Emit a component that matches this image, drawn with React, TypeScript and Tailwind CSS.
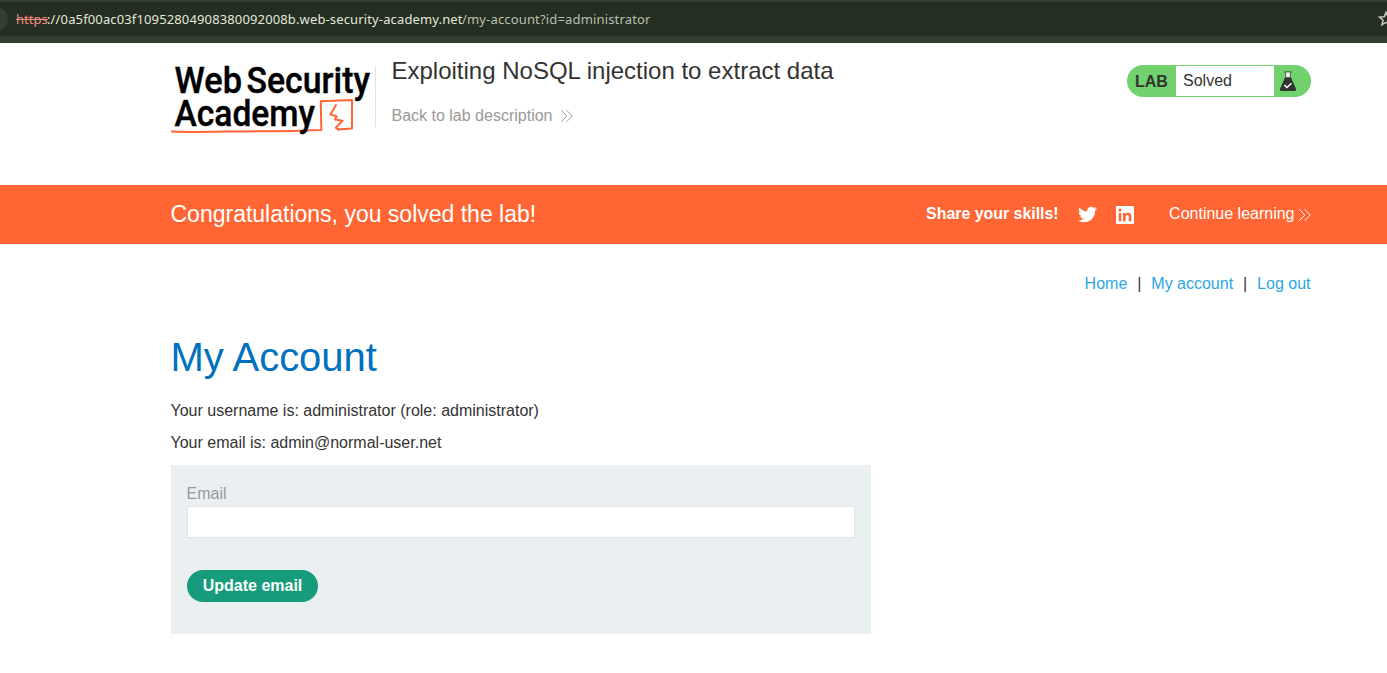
import React from "react";

function Chevrons({ className }: { className: string }) {
  return (
    <svg className={className} width="14" height="14" viewBox="0 0 14 14" fill="none" stroke="currentColor" strokeWidth="0.9">
      <path d="M1.2 1.2 6.8 7 1.2 12.8M6.6 1.2 12.2 7 6.6 12.8" />
    </svg>
  );
}

function AddressBar() {
  return (
    <div className="flex h-[43px] flex-col bg-[#343e2f] pt-[2px]">
      <div className="flex h-[34px] items-center justify-between overflow-hidden bg-[#242e21]">
        <div className="flex items-center">
          <span className="-ml-[16px] h-[24px] w-[24px] rounded-full bg-[#343e2f]" />
          <div className="ml-[8px] flex whitespace-pre font-['Noto_Sans',sans-serif] text-[13px] leading-[20px] text-[#e3e8dc]">
            <span className="w-[31px] text-[#f28b80] line-through">https</span>
            <span className="w-[415px] tracking-[0.135px]">://0a5f00ac03f10952804908380092008b.web-security-academy.net</span>
            <span className="tracking-[0.16px] text-[#b9c1b0]">/my-account?id=administrator</span>
          </div>
        </div>
        <svg className="-mr-[8px] shrink-0" width="18" height="18" viewBox="0 0 18 18" fill="none" stroke="#c5cbbd" strokeWidth="1.5">
          <path d="m9 2.5 1.8 4.2 4.7.4-3.6 3.1 1.1 4.6L9 12.4l-4 2.4 1.1-4.6-3.6-3.1 4.7-.4Z" />
        </svg>
      </div>
    </div>
  );
}

function Logo() {
  return (
    <svg className="shrink-0 overflow-visible" width="204" height="75" viewBox="171 62 204 75">
      <g fill="#000" stroke="#000" strokeWidth="0.4" fontFamily="Roboto, sans-serif" fontWeight="500" fontSize="37.4">
        <text x="174.5" y="93.3" textLength="67.5" lengthAdjust="spacingAndGlyphs">Web</text>
        <text x="246.5" y="93.3" textLength="123.5" lengthAdjust="spacingAndGlyphs">Security</text>
      </g>
      <g fill="none" stroke="#ff6633" strokeLinejoin="round" strokeLinecap="round">
        <path strokeWidth="2" d="M172 131.6C200 132.8 235 130.8 268 131.2S308 130 321.3 130L320.8 101.2 352 100 352 128.6 338 129.4" />
        <path strokeWidth="2" d="M336 105 330.4 114.4 336.6 116.2 335 119.6 342.6 120.8 335.8 127.8 338.4 129.4" />
      </g>
      <text x="174.5" y="126.3" fill="#000" stroke="#000" strokeWidth="0.4" fontFamily="Roboto, sans-serif" fontWeight="500" fontSize="36" textLength="140.5" lengthAdjust="spacingAndGlyphs">Academy</text>
    </svg>
  );
}

function LabStatus() {
  return (
    <div className="mt-[22px] flex h-[32px] w-[184px] items-stretch overflow-hidden rounded-full bg-[#70d16d] py-px">
      <span className="w-[49px] pl-[8px] text-[16px] font-bold leading-[31px]">LAB</span>
      <span className="w-[98px] bg-white pl-[7px] leading-[29px]">Solved</span>
      <svg className="ml-[5px] mt-[4px]" width="18" height="23" viewBox="0 0 18 23">
        <path d="M5.4 2h7.2" stroke="#333332" strokeWidth="1" />
        <path d="M6.9 2.5h4.2v5.3H6.9z" fill="#fff" />
        <path d="M6.7 2.6v5.4M11.3 2.6v5.4" stroke="#333332" strokeWidth=".7" />
        <path d="M6.1 7.3h5.8l5.1 11.8q.7 1.9-1.3 1.9H2.3q-2 0-1.3-1.9Z" fill="#333332" />
        <path d="m5.4 15 2.5 2.5 4.6-4.2" fill="none" stroke="#fff" strokeWidth="1.4" />
      </svg>
    </div>
  );
}

function Banner() {
  return (
    <section className="h-[59px] bg-[#ff6633] text-white">
      <div className="ml-[170.5px] flex h-[57px] w-[1141px] items-center">
        <h4 className="flex-1 text-[23px] leading-[28px]">Congratulations, you solved the lab!</h4>
        <span className="w-[151.5px] font-bold tracking-[-0.05px]">Share your skills!</span>
        <svg className="mt-[2px]" width="19" height="19" viewBox="0 0 24 24" fill="#fff">
          <path d="M23.95 4.57a10 10 0 0 1-2.82.78 4.96 4.96 0 0 0 2.16-2.73c-.95.56-2 .96-3.13 1.19a4.92 4.92 0 0 0-8.38 4.48C7.69 8.1 4.07 6.13 1.64 3.16a4.82 4.82 0 0 0-.67 2.48c0 1.71.87 3.21 2.19 4.1a4.9 4.9 0 0 1-2.23-.62v.06a4.92 4.92 0 0 0 3.95 4.83 5 5 0 0 1-2.21.08 4.94 4.94 0 0 0 4.6 3.42A9.87 9.87 0 0 1 0 19.54a14 14 0 0 0 7.55 2.21c9.05 0 14-7.5 14-13.98 0-.21 0-.42-.02-.63a9.94 9.94 0 0 0 2.46-2.55z" />
        </svg>
        <svg className="ml-[19.5px] mt-[2px]" width="18" height="18" viewBox="0 0 18 18">
          <rect width="18" height="18" rx="1" fill="#fff" />
          <circle cx="4" cy="4" r="1.55" fill="#ff6633" />
          <path fill="#ff6633" d="M2.7 7h2.6v8.3H2.7zM7 7h2.5v1.1C10.2 7 11 6.7 12.1 6.7c2.7 0 3.2 1.7 3.2 4.1v4.5h-2.6v-4c0-1.2-.1-2.2-1.4-2.2-1.4 0-1.7 1-1.7 2.2v4H7z" />
        </svg>
        <a className="ml-[35px] flex items-center whitespace-nowrap">
          Continue learning
          <Chevrons className="ml-[3px] mt-[3px]" />
        </a>
      </div>
    </section>
  );
}

export default function App() {
  return (
    <div className="h-[673px] overflow-hidden bg-white font-['Liberation_Sans',Arial,sans-serif] text-[16px] leading-[24px] text-[#333332]">
      <AddressBar />
      <header className="ml-[171px] flex h-[142px] w-[1140px] items-start">
        <div className="flex h-[94px] flex-1 pt-[19px]">
          <Logo />
          <div className="mt-[4px] h-[61px] w-px bg-[#e2e2e2]" />
          <div className="-mt-[5px] ml-[15.5px]">
            <h2 className="text-[24px] leading-[28px]">Exploiting NoSQL injection to extract data</h2>
            <a className="mt-[19px] flex items-center text-[#999]">
              Back to lab description
              <Chevrons className="ml-[8px] mt-[-1px]" />
            </a>
          </div>
        </div>
        <LabStatus />
      </header>
      <Banner />
      <main className="ml-[171px] w-[1140px]">
        <nav className="flex h-[79px] items-center justify-end whitespace-pre pr-[0.5px] text-[#29a7df]">
          <a>Home</a>
          <span className="w-[24px] text-center text-[#333332]">|</span>
          <a>My account</a>
          <span className="w-[24px] text-center text-[#333332]">|</span>
          <a>Log out</a>
        </nav>
        <h1 className="-ml-[0.5px] mt-[10px] text-[40px] leading-[48px] tracking-[-0.05px] text-[#0071bc]">My Account</h1>
        <p className="-ml-[0.5px] mt-[18px]">Your username is: administrator (role: administrator)</p>
        <p className="-ml-[0.5px] mt-[8px]">Your email is: admin@normal-user.net</p>
        <form className="mt-[10px] h-[169px] w-[700px] bg-[#eaeff2] px-[16px] pt-[17px]">
          <label className="-ml-[0.5px] block text-[#999]">Email</label>
          <input aria-label="Email" className="block h-[32px] w-full border border-[#e4e4e4] bg-white px-2 outline-none" />
          <button type="button" className="mt-[32px] block h-[32px] w-[131px] rounded-full bg-[#169b7d] pb-[1px] text-[16px] font-bold leading-[31px] text-white">Update email</button>
        </form>
      </main>
    </div>
  );
}
